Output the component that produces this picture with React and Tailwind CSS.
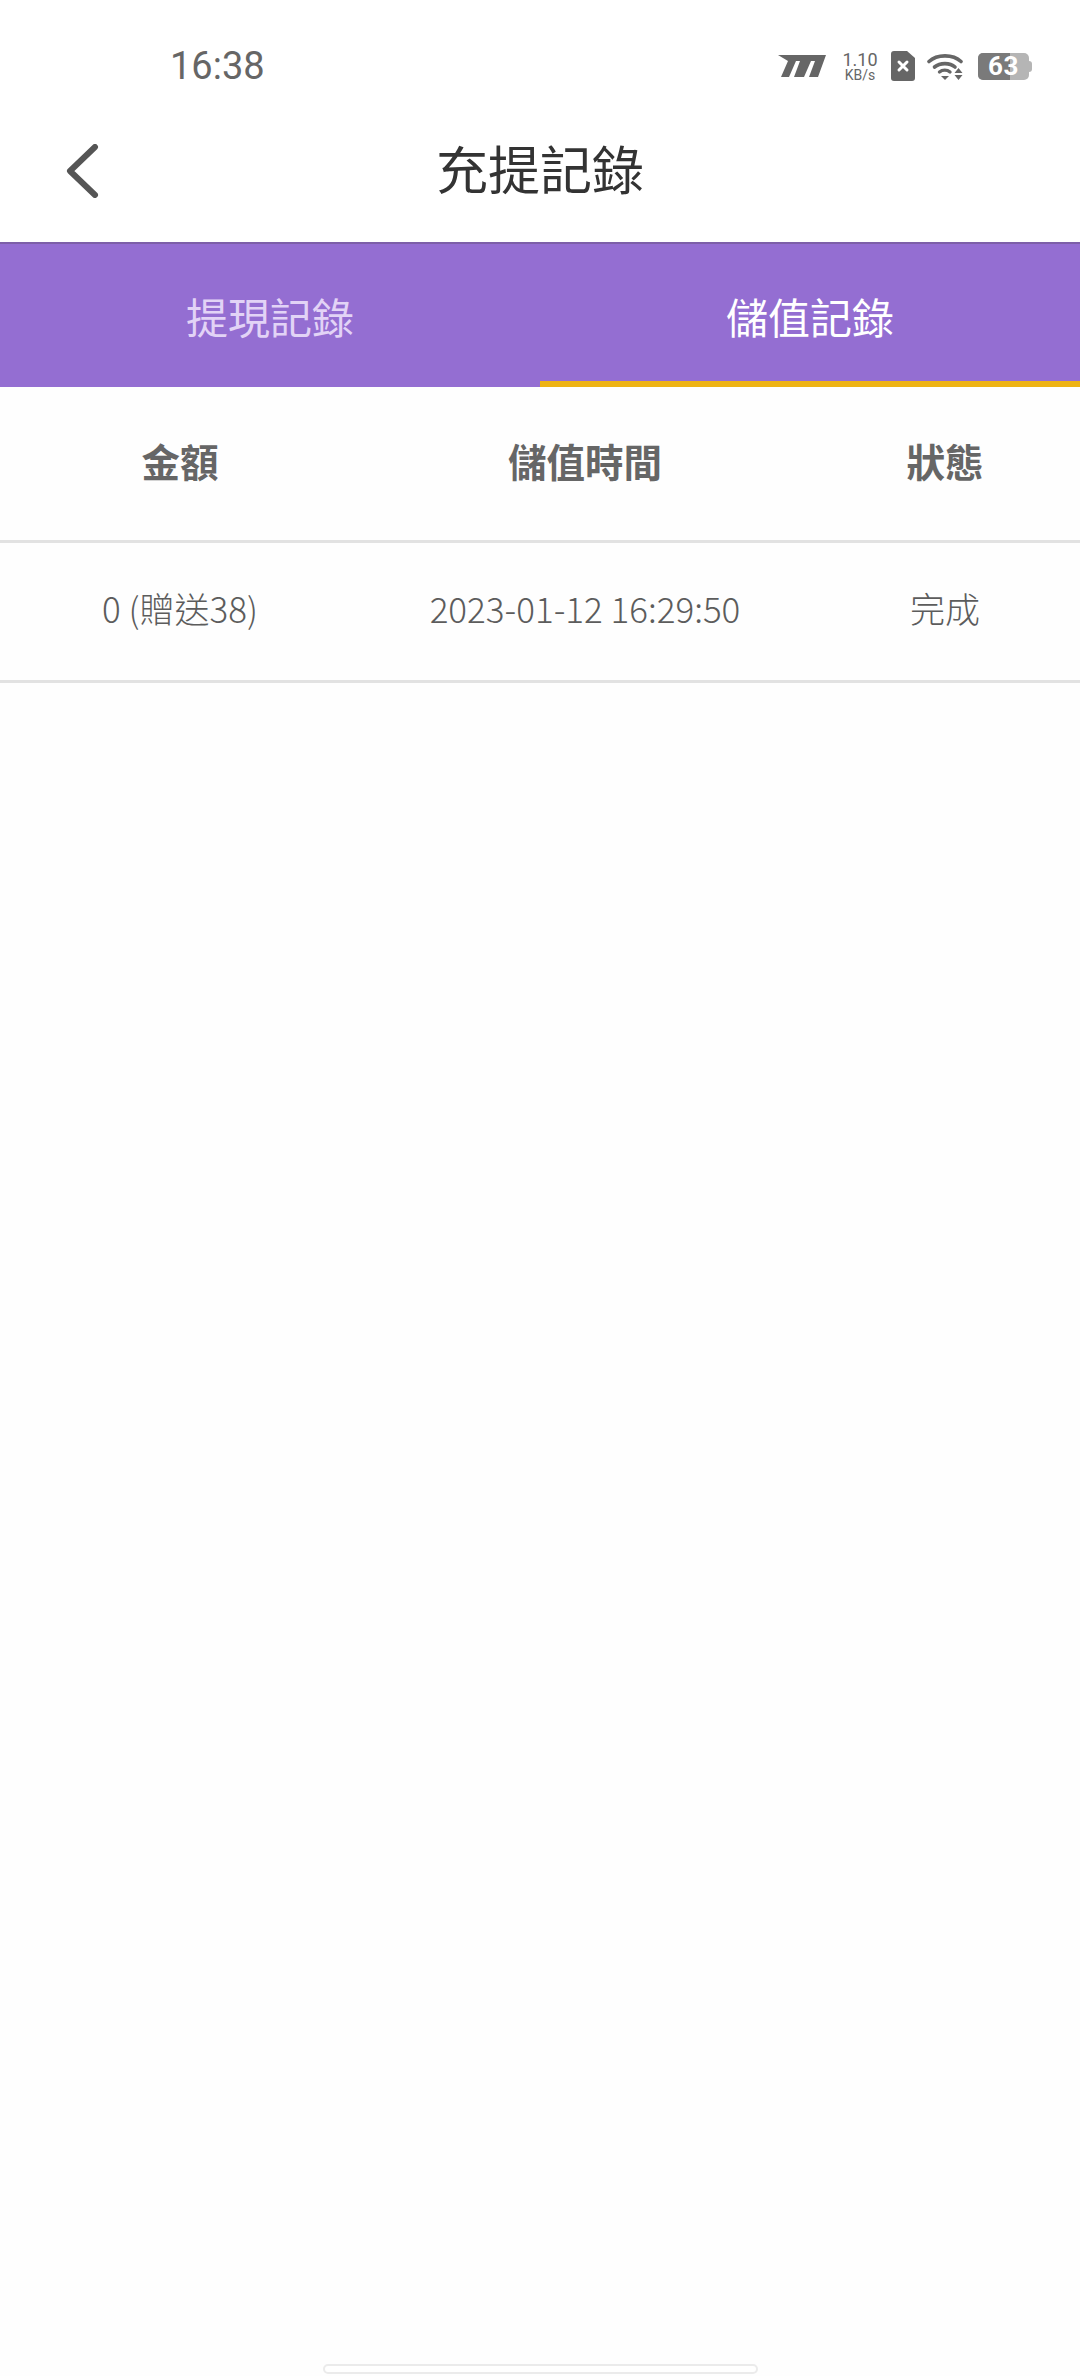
const cjk = { fontFamily: '"Noto Sans CJK TC", "Noto Sans CJK SC", sans-serif' };

function SignalLogo() {
  return (
    <svg width="48" height="22" viewBox="0 0 48 22" fill="#666">
      <path d="M0 0H48L40 22H31L37 6H33L26 22H16L22 6H18L11 22H3L10 6Z" />
    </svg>
  );
}

function SimX() {
  return (
    <svg width="24" height="30" viewBox="0 0 24 30">
      <path d="M3 0H16L24 7V27Q24 30 21 30H3Q0 30 0 27V3Q0 0 3 0Z" fill="#666" />
      <path d="M8 11L16 19M16 11L8 19" stroke="#fff" strokeWidth="3" strokeLinecap="round" />
    </svg>
  );
}

function Wifi() {
  return (
    <svg width="37" height="27" viewBox="0 0 37 27" fill="none">
      <path d="M2 8.5C10 1 26 1 34 8.5" stroke="#666" strokeWidth="3.6" strokeLinecap="round" />
      <path d="M7.5 14C13 9.5 23 9.5 28 14" stroke="#666" strokeWidth="3.6" strokeLinecap="round" />
      <path d="M12.5 19C15.5 16.5 20 16.5 23 19" stroke="#666" strokeWidth="3.4" strokeLinecap="round" />
      <path d="M14 23H22L18 27Z" fill="#666" />
      <path d="M31.5 15L35.5 20H27.5Z M27.5 22H35.5L31.5 27Z" fill="#666" />
    </svg>
  );
}

function Battery() {
  return (
    <div className="relative flex h-[27px] w-[54px] items-center">
      <div className="relative h-[27px] w-[51px] overflow-hidden rounded-[5px] bg-[#b5b5b5]">
        <div className="h-full w-[63%] bg-[#7a7a7a]" />
      </div>
      <div className="h-[11px] w-[3px] rounded-r-sm bg-[#b5b5b5]" />
      <span
        className="absolute left-[10px] top-0 text-[26px] leading-[27px] font-bold text-white tracking-[0.5px]"
        style={{ fontFamily: 'Roboto, sans-serif' }}
      >
        63
      </span>
    </div>
  );
}

function Row({ cells, className }) {
  return (
    <div className={`grid grid-cols-[360px_450px_270px] items-center border-b-[3px] border-[#e2e2e2] ${className}`}>
      {cells.map((c) => (
        <div key={c} className="text-center whitespace-nowrap">{c}</div>
      ))}
    </div>
  );
}

export default function App() {
  return (
    <div className="flex h-[2376px] w-[1080px] flex-col bg-[#fefefe]" style={cjk}>
      <div className="flex h-[100px] items-center justify-between bg-white pl-[170px] pr-[48px] pt-[32px]">
        <span className="text-[38px] text-[#666]" style={{ fontFamily: 'Roboto, sans-serif' }}>16:38</span>
        <div className="flex items-center">
          <SignalLogo />
          <div className="ml-[16px] flex w-[36px] flex-col items-center text-[#666]" style={{ fontFamily: 'Roboto, sans-serif' }}>
            <span className="text-[18px] leading-[18px]">1.10</span>
            <span className="text-[14px] leading-[13px]">KB/s</span>
          </div>
          <div className="ml-[13px]"><SimX /></div>
          <div className="ml-[12px]"><Wifi /></div>
          <div className="ml-[14px]"><Battery /></div>
        </div>
      </div>

      <div className="relative flex h-[142px] items-center justify-center bg-white pb-[6px]">
        <svg className="absolute left-[65px] top-[44px]" width="34" height="54" viewBox="0 0 34 54" fill="none">
          <path d="M30 3L5 27L30 51" stroke="#555" strokeWidth="6" strokeLinecap="round" strokeLinejoin="round" />
        </svg>
        <span className="text-[52px] leading-none text-[#333]">充提記錄</span>
      </div>

      <div className="flex h-[145px] border-t-2 border-[#7d5fa8] bg-[#946ed2]">
        <div className="flex flex-1 items-center justify-center text-[42px] text-[#e2d3f6]">提現記錄</div>
        <div className="flex flex-1 items-center justify-center border-b-[6px] border-[#eeb314] pt-[6px] text-[42px] text-white">儲值記錄</div>
      </div>

      <Row cells={['金額', '儲值時間', '狀態']} className="h-[156px] pb-[6px] text-[38.5px] font-bold text-[#666]" />
      <Row cells={['0 (贈送38)', '2023-01-12 16:29:50', '完成']} className="h-[140px] pb-[6px] text-[35px] font-light text-[#5c5c5c]" />

      <div className="flex-1" />
      <div className="flex justify-center pb-[2px]">
        <div className="h-[10px] w-[435px] rounded-full border-2 border-[#ebebeb] bg-white" />
      </div>
    </div>
  );
}
